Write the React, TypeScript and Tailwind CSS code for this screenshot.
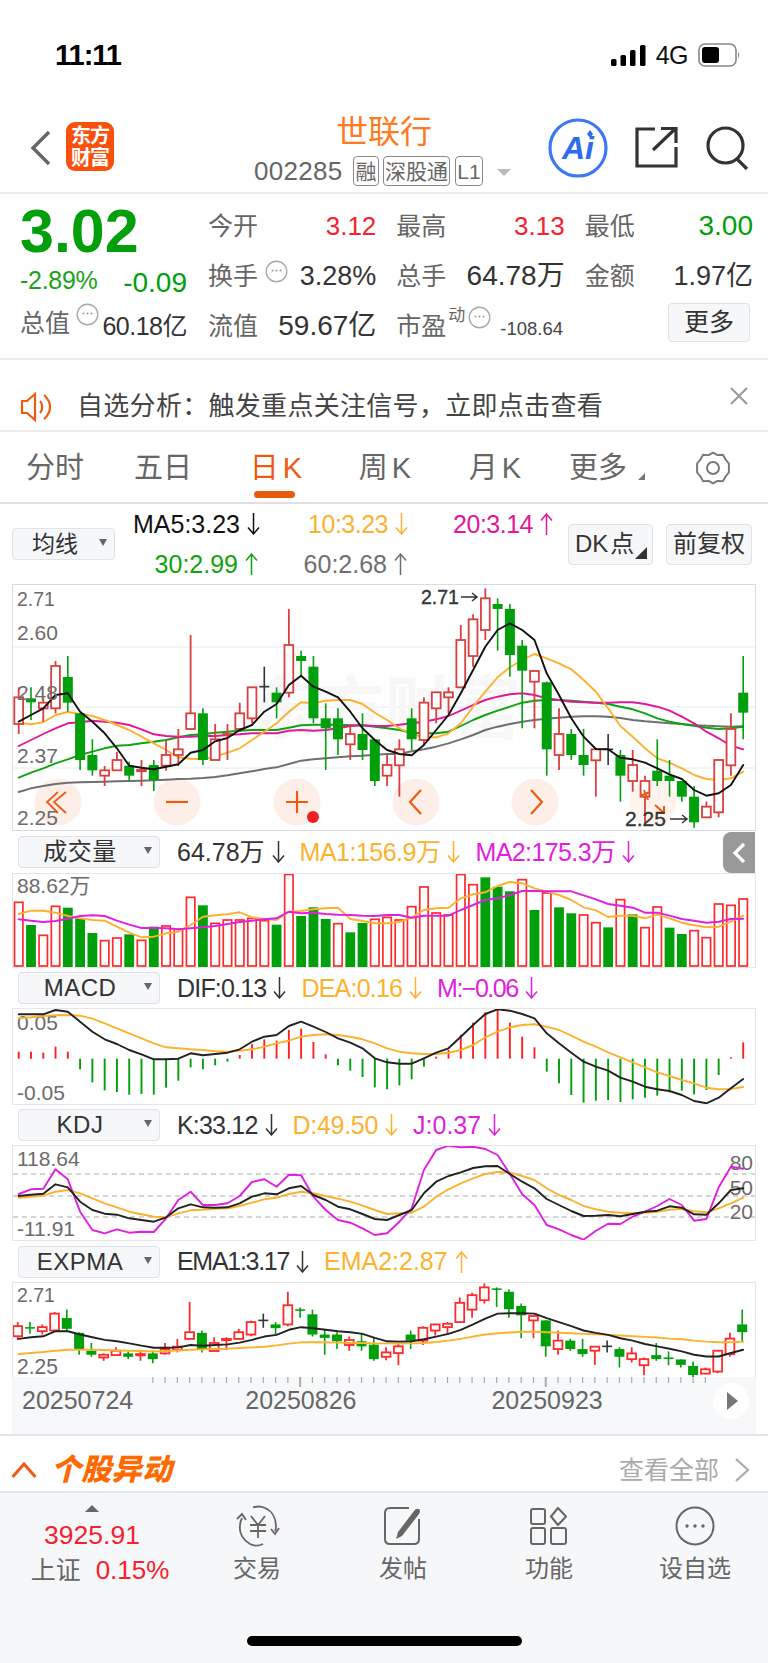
import React from "react";

const X = (i: number) => 18.7 + 12.28 * i;
type C = [number, number, number, number, string];

const mainCandles: C[] = [
  [322,352,432,462,"r"],[322,355,367,420,"g"],[355,368,385,425,"r"],[243,258,385,400,"r"],[228,291,368,395,"g"],
  [400,400,540,570,"g"],[478,525,571,587,"g"],[558,571,587,618,"r"],[515,540,571,571,"r"],[545,557,587,603,"g"],
  [540,570,571,618,"r"],[540,555,600,633,"g"],[480,525,557,572,"r"],[447,508,525,558,"r"],[165,400,447,447,"r"],
  [385,400,540,555,"g"],[432,478,540,540,"r"],[432,462,463,540,"r"],[368,400,447,447,"r"],[320,322,415,430,"r"],
  [260,320,320,367,"k"],[322,338,367,415,"g"],[87,195,338,352,"r"],[212,228,243,290,"g"],[228,260,415,430,"g"],
  [370,415,445,570,"g"],[385,415,478,525,"g"],[432,462,493,540,"r"],[400,462,510,540,"g"],[478,478,603,618,"g"],
  [525,555,587,618,"r"],[478,508,556,650,"r"],[385,415,478,510,"g"],[352,368,480,495,"r"],[335,337,385,430,"r"],
  [322,337,352,400,"r"],[135,180,322,322,"r"],[103,118,228,260,"r"],[25,55,150,180,"r"],[55,72,87,212,"g"],
  [72,87,225,290,"g"],[180,197,272,445,"g"],[272,273,305,445,"r"],[305,307,508,587,"g"],[385,462,525,570,"r"],
  [447,462,525,540,"g"],[447,525,555,587,"g"],[508,508,541,650,"r"],[462,508,508,555,"k"],[510,525,587,665,"g"],
  [510,555,603,635,"r"],[587,603,650,730,"r"],[478,572,603,618,"g"],[540,587,603,650,"g"],[603,603,650,665,"g"],
  [618,650,727,743,"g"],[665,680,712,712,"r"],[540,540,697,712,"r"],[400,447,556,587,"r"],[228,338,398,478,"g"],
];
const ma5 = [425,405,385,345,340,395,425,460,505,557,563,568,560,553,518,510,484,474,450,435,395,372,315,287,320,335,352,395,445,480,510,522,526,495,450,405,340,270,200,150,130,150,180,280,345,415,470,507,508,533,538,548,565,583,597,630,647,640,615,555];
const ma10 = [428,433,427,405,396,402,408,420,435,450,470,490,510,532,536,538,530,518,505,480,455,430,395,367,370,362,360,360,372,398,420,445,462,472,472,460,430,380,335,292,262,240,222,235,250,268,300,335,385,438,470,505,535,548,565,585,597,600,595,575];
const ma20 = [498,480,462,445,430,427,422,425,428,435,448,463,468,470,470,468,468,465,463,460,460,460,452,450,452,450,445,438,436,438,438,434,430,425,418,408,392,375,360,350,343,340,345,355,360,365,367,368,368,367,367,372,380,392,410,430,455,475,497,508];
const ma30 = [593,578,565,550,538,525,515,505,497,495,490,485,480,472,465,463,458,455,452,450,450,450,443,436,434,434,434,436,436,440,445,450,458,460,460,455,438,420,405,392,380,368,362,360,360,362,365,368,372,380,388,400,415,425,432,437,443,447,445,440];
const ma60 = [636,625,618,612,608,607,606,605,604,603,602,601,599,597,596,594,591,586,580,574,567,562,552,542,538,535,532,529,527,524,522,522,514,508,500,490,478,465,450,440,432,425,420,416,413,410,409,409,410,414,420,424,427,430,432,436,437,439,440,439];

const vols = [217,285,316,229,233,265,309,332,324,313,331,290,288,298,202,226,280,270,270,265,272,284,128,258,232,267,281,307,279,268,262,270,230,171,249,255,128,164,142,170,184,149,240,189,232,250,255,278,292,209,253,293,231,293,312,302,323,222,226,207];
const volUp = "rgrrgggrrgrgrrrgrrrrrgrgggrggrrrrrrrrrgggrgrggrrgrgrrggrrrr";
const v1 = [252,242,242,248,258,265,270,272,290,308,322,320,310,305,285,260,256,253,247,262,267,270,245,243,238,235,233,267,273,280,280,276,262,240,235,233,205,193,187,168,156,160,175,185,195,210,232,241,261,257,257,265,254,265,278,286,292,290,275,257];
const v2 = [268,272,276,273,266,258,256,258,272,284,294,294,295,298,295,292,288,282,276,272,268,265,245,250,248,252,254,255,257,258,255,255,263,257,257,257,240,225,210,205,195,183,183,184,184,184,196,208,222,227,233,248,248,257,267,272,278,275,267,266];

const macd = [665,665,668,650,665,718,757,781,786,794,792,794,773,752,712,718,706,695,675,643,628,632,600,596,636,673,706,722,741,772,778,766,748,710,680,660,615,578,547,540,578,620,652,725,760,795,818,812,810,816,808,803,797,787,782,793,780,735,682,637];
const dif = [553,553,553,540,545,575,605,628,642,660,673,688,688,686,670,676,672,668,658,635,620,615,588,575,590,606,625,638,655,685,697,701,701,685,668,655,620,585,552,538,542,552,565,610,640,668,695,710,722,743,755,770,778,783,795,813,820,803,775,747];
const dea = [565,562,558,556,555,557,566,580,595,610,625,640,652,655,658,660,664,665,662,658,650,640,632,620,615,613,615,620,628,640,655,665,670,672,672,668,660,645,622,605,592,585,583,590,600,617,635,650,667,682,697,712,727,738,750,760,773,778,777,771];

const kK = [288,284,281,253,262,305,330,341,344,355,360,365,352,325,313,322,323,322,310,290,280,283,265,258,285,300,320,328,342,357,360,345,330,280,245,228,217,204,199,198,222,245,265,297,315,333,348,347,345,349,342,335,332,319,323,343,344,310,270,265];
const kD = [293,290,287,275,270,280,295,310,322,335,343,350,352,340,331,329,326,325,318,308,298,293,282,275,280,288,296,305,317,330,342,340,338,320,290,268,250,235,222,216,218,228,240,265,285,300,318,328,335,338,340,338,335,329,327,334,337,325,310,293];
const kJ = [282,268,266,208,238,335,390,400,388,398,395,396,355,300,275,315,315,310,288,246,238,260,224,226,290,330,360,368,385,405,400,365,325,210,150,137,142,140,147,165,222,283,315,375,388,405,419,392,371,372,350,335,318,297,315,362,357,262,200,206];

const emaCandles: C[] = [
  [665,677,707,718,"r"],[665,680,683,700,"g"],[672,680,692,702,"r"],[635,640,690,692,"r"],[628,653,685,692,"g"],
  [695,697,745,762,"g"],[727,750,762,768,"g"],[758,762,770,780,"r"],[740,750,763,763,"r"],[752,758,768,775,"g"],
  [752,760,761,780,"r"],[750,758,775,787,"g"],[727,745,758,762,"r"],[715,738,747,755,"r"],[605,695,715,715,"r"],
  [690,697,745,755,"g"],[710,727,751,751,"r"],[710,715,716,748,"r"],[685,695,715,718,"r"],[660,665,702,707,"r"],
  [640,660,660,682,"k"],[665,672,683,702,"g"],[575,615,672,678,"r"],[622,627,630,652,"g"],[628,642,702,708,"g"],
  [685,702,712,762,"g"],[695,702,722,745,"g"],[708,718,733,750,"r"],[697,722,737,750,"g"],[710,732,775,780,"g"],
  [740,755,768,778,"r"],[730,737,757,793,"r"],[690,702,720,745,"g"],[677,682,720,733,"r"],[670,672,690,705,"r"],
  [665,670,680,703,"r"],[592,608,665,665,"r"],[578,585,628,652,"r"],[550,562,600,610,"r"],[562,565,567,620,"g"],
  [568,575,627,652,"g"],[610,617,645,713,"g"],[645,647,660,713,"r"],[660,660,737,768,"g"],[690,720,745,762,"r"],
  [715,720,745,750,"g"],[715,745,760,768,"g"],[737,738,750,792,"r"],[720,737,737,755,"k"],[740,745,768,800,"g"],
  [740,758,775,785,"r"],[770,775,793,823,"r"],[727,763,775,780,"g"],[752,770,771,793,"g"],[775,776,792,800,"g"],
  [782,795,822,830,"g"],[800,805,818,820,"r"],[750,750,812,817,"r"],[697,714,760,768,"r"],[628,672,695,722,"g"],
];
const ema1 = [715,710,707,692,692,702,710,718,722,728,735,741,741,740,733,735,733,731,726,718,708,703,688,680,683,688,692,695,700,712,722,723,722,716,708,700,688,672,655,640,639,639,640,653,665,677,690,697,703,713,720,730,737,744,752,762,767,767,757,747];
const ema2 = [760,757,754,750,747,747,747,748,749,750,751,752,751,749,747,746,745,744,742,740,738,734,729,725,725,725,726,727,727,728,728,729,728,727,724,720,715,708,702,698,696,694,694,695,697,698,700,701,703,705,707,709,711,714,716,720,723,725,725,723];

const ORANGE = "#FDB22F";
const MAG = "#E020E0";

function Line({ d, base, color, w = 1.9, dx = 0 }: { d: number[]; base: number; color: string; w?: number; dx?: number }) {
  return (
    <polyline
      points={d.map((z, i) => `${(X(i) + dx).toFixed(1)},${(base + z / 3).toFixed(1)}`).join(" ")}
      fill="none"
      stroke={color}
      strokeWidth={w}
      strokeLinejoin="round"
      strokeLinecap="round"
    />
  );
}

function Candles({ data, base, red, dx = 0 }: { data: C[]; base: number; red: string; dx?: number }) {
  const G = "#009F0B";
  return (
    <g>
      {data.map(([h, t, b, l, k], i) => {
        const x = X(i) + dx;
        const y = (z: number) => base + z / 3;
        if (k === "k") {
          return (
            <g key={i} stroke="#333" strokeWidth={1.6}>
              <line x1={x} x2={x} y1={y(h)} y2={y(l)} />
              <line x1={x - 5} x2={x + 5} y1={y(t)} y2={y(t)} />
            </g>
          );
        }
        if (k === "g") {
          return (
            <g key={i}>
              <line x1={x} x2={x} y1={y(h)} y2={y(l)} stroke={G} strokeWidth={1.6} />
              <rect x={x - 5} y={y(t)} width={10} height={Math.max(y(b) - y(t), 1.5)} fill={G} />
            </g>
          );
        }
        return (
          <g key={i} stroke={red} strokeWidth={1.8}>
            <line x1={x} x2={x} y1={y(h)} y2={y(t)} />
            <line x1={x} x2={x} y1={y(b)} y2={y(l)} />
            <rect x={x - 4.4} y={y(t)} width={8.8} height={Math.max(y(b) - y(t), 1.2)} fill="#fff" />
          </g>
        );
      })}
    </g>
  );
}

const LBL = { fontFamily: "'Liberation Sans',sans-serif", fontSize: 21, fill: "#6b6b6b" };

function ChartBox({ top, h, cls, children }: { top: number; h: number; cls: string; children: React.ReactNode }) {
  return (
    <div className={cls}>
      <svg className="block w-full h-full" viewBox={`13 ${top + 1} 742 ${h - 2}`} preserveAspectRatio="none">
        {children}
      </svg>
    </div>
  );
}

function Sel({ label }: { label: string }) {
  return (
    <div className="relative flex items-center justify-center w-[142px] h-[32px] bg-[#f6f7f9] border border-[#dfe2e8] rounded-[4px] text-[24px] leading-none text-[#333] pr-[18px] tracking-[0.5px]">
      {label}
      <span className="absolute right-[7px] top-[10px] w-0 h-0 border-l-[4.5px] border-r-[4.5px] border-t-[7px] border-l-transparent border-r-transparent border-t-[#666]" />
    </div>
  );
}

function Arrow({ up }: { up?: boolean }) {
  return (
    <svg className="ml-[7px] shrink-0" width="13" height="22" viewBox="0 0 13 22" fill="none" stroke="currentColor" strokeWidth="1.5">
      {up ? <path d="M6.5 22 V1 M1 7.5 L6.5 1 L12 7.5" /> : <path d="M6.5 0 V21 M1 14.5 L6.5 21 L12 14.5" />}
    </svg>
  );
}

function Val({ t, up, color, cls = "" }: { t: string; up?: boolean; color: string; cls?: string }) {
  return (
    <span className={`inline-flex items-center text-[25px] leading-none whitespace-nowrap ${color} ${cls}`}>
      {t}
      <Arrow up={up} />
    </span>
  );
}

function Info() {
  return (
    <svg width="23" height="23" viewBox="0 0 23 23" className="shrink-0">
      <circle cx="11.5" cy="11.5" r="10.3" fill="none" stroke="#aaa" strokeWidth="1.4" />
      <circle cx="7.5" cy="10.5" r="1" fill="#999" />
      <circle cx="11.5" cy="10.5" r="1" fill="#999" />
      <circle cx="15.5" cy="10.5" r="1" fill="#999" />
    </svg>
  );
}

function Cell({ label, value, color = "text-[#333]", info, size = "text-[28px]" }: { label: string; value: string; color?: string; info?: boolean; size?: string }) {
  return (
    <div className="flex items-center justify-between h-[50px]">
      <span className="flex items-start text-[25px] leading-none text-[#666]">
        {label}
        {info && <span className="ml-[7px] -mt-[4px]"><Info /></span>}
      </span>
      <span className={`leading-none whitespace-nowrap ${size} ${color}`}>{value}</span>
    </div>
  );
}

function Circle({ cx, children }: { cx: number; children: React.ReactNode }) {
  return (
    <g>
      <circle cx={cx} cy={802} r={23.5} fill="#FCE4D8" fillOpacity={0.6} />
      <g fill="none" stroke="#EE5A10" strokeWidth={2.2}>{children}</g>
    </g>
  );
}

function MainChart() {
  return (
    <ChartBox top={584} h={247} cls="ml-[12px] w-[744px] h-[247px] border border-[#d8dbe6]">
      {[647, 707, 768].map((y) => (
        <line key={y} x1={13} x2={755} y1={y} y2={y} stroke="#eef0f5" strokeWidth={1.6} />
      ))}
      <text x={385} y={733} textAnchor="middle" fontFamily="'Noto Sans CJK SC',sans-serif" fontWeight={700} fontSize={68} fill="#f7f7f7">东方财富</text>
      <Circle cx={58}><path d="M66 792 L54 802 L66 813 M58 792 L47 802 L58 813" strokeWidth={1.8} /></Circle>
      <Circle cx={177}><path d="M166 802 H188" /></Circle>
      <Circle cx={297}><path d="M286 802 H308 M297 791 V813" /></Circle>
      <Circle cx={416}><path d="M421 790 L410 802 L421 814" /></Circle>
      <Circle cx={535}><path d="M531 790 L542 802 L531 814" /></Circle>
      <circle cx={653} cy={802} r={23.5} fill="#FCE4D8" fillOpacity={0.45} />
      <Line d={ma60} base={580} color="#6f6f6f" />
      <Line d={ma30} base={580} color="#0FA30F" />
      <Line d={ma20} base={580} color="#E0189A" />
      <Line d={ma10} base={580} color={ORANGE} />
      <Candles data={mainCandles} base={580} red="#D93F3F" />
      <Line d={ma5} base={580} color="#111" />
      <path d="M644 790 L648 800 M640 796 L650 792" stroke="#EE5A10" strokeWidth={2} fill="none" />
      <path d="M655 805 L664 813 M657 813 H664 V806" stroke="#EE5A10" strokeWidth={2} fill="none" />
      <circle cx={313} cy={817} r={6} fill="#F02020" />
      <text x={17} y={606} {...LBL} fontSize={19.5}>2.71</text>
      <text x={17} y={640} {...LBL}>2.60</text>
      <text x={17} y={700} {...LBL}>2.48</text>
      <text x={17} y={763} {...LBL}>2.37</text>
      <text x={17} y={825} {...LBL}>2.25</text>
      <text x={421} y={604} fontFamily="'Liberation Sans',sans-serif" fontSize={19.5} stroke="#333" strokeWidth={0.35} fill="#333">2.71</text>
      <path d="M461 597 H477 M472 593 L477 597 L472 601" stroke="#333" strokeWidth={1.5} fill="none" />
      <text x={625} y={826} fontFamily="'Liberation Sans',sans-serif" fontSize={21} stroke="#333" strokeWidth={0.35} fill="#333">2.25</text>
      <path d="M670 819 H687 M682 815 L687 819 L682 823" stroke="#333" strokeWidth={1.5} fill="none" />
    </ChartBox>
  );
}

function VolChart() {
  return (
    <ChartBox top={873} h={95} cls="ml-[12px] w-[744px] h-[95px] border border-[#e6e6e6]">
      {vols.map((z, i) => {
        const y = Math.max(830 + z / 3, 874.5);
        const x = X(i);
        return volUp[i] === "g" ? (
          <rect key={i} x={x - 4.9} y={y} width={9.8} height={967 - y} fill="#009F0B" />
        ) : (
          <rect key={i} x={x - 4.2} y={y} width={8.4} height={966 - y} fill="#fff" stroke="#FF2B2B" strokeWidth={1.7} />
        );
      })}
      <Line d={v1} base={830} color={ORANGE} />
      <Line d={v2} base={830} color={MAG} />
      <text x={17} y={893} {...LBL} fontFamily="'Liberation Sans','Noto Sans CJK SC',sans-serif">88.62万</text>
    </ChartBox>
  );
}

function MacdChart() {
  return (
    <ChartBox top={1008} h={97} cls="ml-[12px] w-[744px] h-[97px] border border-[#e6e6e6]">
      {macd.map((z, i) => (
        <line key={i} x1={X(i)} x2={X(i)} y1={830 + 686 / 3} y2={830 + z / 3} stroke={z < 686 ? "#FF2020" : "#009F0B"} strokeWidth={1.9} />
      ))}
      <text x={17} y={1030} {...LBL}>0.05</text>
      <text x={17} y={1100} {...LBL}>-0.05</text>
      <Line d={dea} base={830} color={ORANGE} />
      <Line d={dif} base={830} color="#222" />
    </ChartBox>
  );
}

function KdjChart() {
  return (
    <ChartBox top={1145} h={96} cls="ml-[12px] w-[744px] h-[96px] border border-[#e6e6e6]">
      {[1174, 1196, 1217].map((y) => (
        <line key={y} x1={13} x2={755} y1={y} y2={y} stroke="#c8c8c8" strokeWidth={1.3} strokeDasharray="5 4" />
      ))}
      <text x={17} y={1166} {...LBL}>118.64</text>
      <text x={17} y={1236} {...LBL}>-11.91</text>
      <text x={753} y={1170} textAnchor="end" {...LBL}>80</text>
      <text x={753} y={1195} textAnchor="end" {...LBL}>50</text>
      <text x={753} y={1219} textAnchor="end" {...LBL}>20</text>
      <Line d={kD} base={1100} color={ORANGE} />
      <Line d={kJ} base={1100} color={MAG} />
      <Line d={kK} base={1100} color="#222" />
    </ChartBox>
  );
}

function EmaChart() {
  return (
    <ChartBox top={1282} h={95} cls="ml-[12px] w-[744px] h-[95px] border border-b-0 border-[#e6e6e6]">
      <Candles data={emaCandles} base={1100} red="#FF2B2B" dx={-1} />
      <Line d={ema2} base={1100} color={ORANGE} />
      <Line d={ema1} base={1100} color="#222" />
      <text x={17} y={1302} {...LBL} fontSize={19.5}>2.71</text>
      <text x={17} y={1373} {...LBL}>2.25</text>
    </ChartBox>
  );
}

function AxisRow() {
  return (
    <div className="relative ml-[12px] w-[744px] h-[57px] bg-[#f7f8fa] flex items-start text-[25px] leading-none text-[#666]">
      <svg className="absolute left-0 top-0" width="744" height="12" viewBox="12 1377 744 12">
        {Array.from({ length: 46 }, (_, k) => k + 11).map((i) => (
          <line key={i} x1={X(i) - 1} x2={X(i) - 1} y1={1377} y2={i === 23 || i === 43 ? 1387 : 1383} stroke="#aaa" strokeWidth={i === 23 || i === 43 ? 2 : 1.2} />
        ))}
      </svg>
      <span className="ml-[10px] mt-[11px]">20250724</span>
      <span className="ml-[112px] mt-[11px]">20250826</span>
      <span className="ml-[135px] mt-[11px]">20250923</span>
      <span className="absolute left-[701px] top-[6px] w-[36px] h-[36px] rounded-full bg-white flex items-center justify-center">
        <span className="ml-[3px] w-0 h-0 border-t-[9px] border-b-[9px] border-l-[11px] border-t-transparent border-b-transparent border-l-[#777]" />
      </span>
    </div>
  );
}

function NavItem({ label, children }: { label: string; children: React.ReactNode }) {
  return (
    <div className="flex flex-col items-center pt-[12px] w-[146px]">
      <div className="h-[42px] flex items-center">{children}</div>
      <span className="mt-[10px] text-[24px] leading-none text-[#666]">{label}</span>
    </div>
  );
}

export default function App() {
  return (
    <div className="relative w-[768px] h-[1663px] bg-white overflow-hidden font-['Liberation_Sans','Noto_Sans_CJK_SC',sans-serif]">
      {/* status */}
      <div className="h-[100px] relative">
        <div className="flex items-center justify-between pt-[41px] pl-[55px] pr-[28px]">
          <span className="text-[29px] leading-[28px] font-bold text-black tracking-[-1px]">11:11</span>
          <div className="flex items-center">
            <svg width="35" height="21" viewBox="0 0 35 21" fill="#000">
              <rect x="0" y="14" width="5.5" height="7" rx="1.5" />
              <rect x="9.5" y="10" width="5.5" height="11" rx="1.5" />
              <rect x="19" y="5" width="5.5" height="16" rx="1.5" />
              <rect x="29" y="0" width="5.5" height="21" rx="1.5" />
            </svg>
            <span className="ml-[10px] text-[25px] leading-none font-medium text-[#111] tracking-[-0.5px]">4G</span>
            <svg className="ml-[10px]" width="42" height="24" viewBox="0 0 42 24">
              <rect x="1" y="1" width="37" height="22" rx="6" fill="none" stroke="#888" strokeWidth="1.6" />
              <rect x="4" y="4" width="17" height="16" rx="3" fill="#000" />
              <path d="M40 9 C41.5 10 41.5 14 40 15 Z" fill="#888" />
            </svg>
          </div>
        </div>
      </div>
      {/* header */}
      <div className="flex h-[94px] border-b-2 border-[#ececec]">
        <div className="w-[254px] pl-[30px] pt-[22px] flex items-start">
          <svg className="mt-[8px]" width="20" height="36" viewBox="0 0 20 36" fill="none" stroke="#666" strokeWidth="3.4">
            <path d="M19 2 L3 18 L19 34" />
          </svg>
          <div className="ml-[16px] w-[48px] h-[49px] rounded-[9px] bg-[#FB500C] text-white text-[20px] leading-[22px] font-bold flex flex-col items-center justify-center tracking-[-1px]">
            <span>东方</span>
            <span>财富</span>
          </div>
        </div>
        <div className="w-[260px] flex flex-col">
          <div className="pt-[13px] text-center text-[32px] leading-[38px] text-[#FF7A1E]">世联行</div>
          <div className="flex items-center mt-[5px]">
            <span className="text-[26px] leading-none text-[#666] w-[99px] tracking-[0.3px]">002285</span>
            <span className="flex items-center justify-center h-[30px] w-[26px] border border-[#888] rounded-[4px] text-[21px] leading-none text-[#666]">融</span>
            <span className="ml-[4px] flex items-center justify-center h-[30px] w-[67px] border border-[#888] rounded-[4px] text-[21px] leading-none text-[#666]">深股通</span>
            <span className="ml-[5px] flex items-center justify-center h-[30px] w-[28px] border border-[#888] rounded-[4px] text-[21px] leading-none text-[#666]">L1</span>
            <span className="ml-[14px] mt-[2px] w-0 h-0 border-l-[7px] border-r-[7px] border-t-[7px] border-l-transparent border-r-transparent border-t-[#bbb]" />
          </div>
        </div>
        <div className="flex items-start pt-[18px]">
          <svg className="ml-[34px]" width="60" height="60" viewBox="0 0 60 60">
            <circle cx="30" cy="30" r="28" fill="none" stroke="#3D78F2" strokeWidth="3.2" />
            <text x="30" y="41" textAnchor="middle" fontFamily="'Liberation Sans',sans-serif" fontWeight="700" fontStyle="italic" fontSize="32" fill="#2E6BF0">Ai</text>
            <path d="M42 12 L45 16 L42 20 L39 16 Z" fill="#2E6BF0" />
          </svg>
          <svg className="ml-[27px] mt-[8px]" width="43" height="42" viewBox="0 0 43 42" fill="none" stroke="#333" strokeWidth="3.2">
            <path d="M20 3 H2 V40 H41 V21" />
            <path d="M18 24 L40 3 M26 2.5 H41 V17" />
          </svg>
          <svg className="ml-[28px] mt-[8px]" width="44" height="44" viewBox="0 0 44 44" fill="none" stroke="#333" strokeWidth="3.2">
            <circle cx="19.5" cy="19.5" r="17.5" />
            <path d="M31 33 L41 43" />
          </svg>
        </div>
      </div>
      {/* quote */}
      <div className="flex h-[166px] border-b-2 border-[#ececec] pt-[7px]">
        <div className="pl-[20px] w-[208px] flex flex-col">
          <span className="text-[61px] leading-[56px] mt-[2px] font-semibold text-[#009F0B]">3.02</span>
          <div className="mt-[9px] w-[167px] flex justify-between items-start h-[28px]">
            <span className="text-[25px] leading-none text-[#1AA31A] tracking-[-0.3px]">-2.89%</span>
            <span className="text-[28px] leading-none text-[#009F0B] mt-[1px]">-0.09</span>
          </div>
          <div className="mt-[10px] w-[167px] flex items-center justify-between h-[34px]">
            <span className="flex items-start text-[25px] leading-none text-[#666]">总值<span className="ml-[6px] -mt-[8px]"><Info /></span></span>
            <span className="text-[25px] leading-none text-[#333] tracking-[-0.5px] mt-[6px]">60.18亿</span>
          </div>
        </div>
        <div className="w-[545px] grid grid-cols-3 gap-x-[20px] content-start">
          <Cell label="今开" value="3.12" size="text-[26px]" color="text-[#F5222D]" />
          <Cell label="最高" value="3.13" size="text-[26px]" color="text-[#F5222D]" />
          <Cell label="最低" value="3.00" color="text-[#009F0B]" />
          <Cell label="换手" value="3.28%" size="text-[27px]" info />
          <Cell label="总手" value="64.78万" />
          <Cell label="金额" value="1.97亿" size="text-[27px]" />
          <Cell label="流值" value="59.67亿" />
          <div className="flex items-center h-[50px] relative">
            <span className="text-[25px] leading-none text-[#666]">市盈</span>
            <span className="ml-[2px] -mt-[22px] text-[17px] leading-none text-[#666]">动</span>
            <span className="ml-[3px] -mt-[18px]"><Info /></span>
            <span className="ml-[9px] mt-[6px] text-[18.5px] leading-none text-[#444]">-108.64</span>
          </div>
          <div className="flex items-center justify-end h-[50px] -mt-[4px]">
            <span className="w-[82px] h-[39px] mr-[3px] flex items-center justify-center bg-[#f6f7f9] border border-[#dfe1e6] rounded-[4px] text-[25px] leading-none text-[#333]">更多</span>
          </div>
        </div>
      </div>
      {/* alert */}
      <div className="flex items-center h-[72px] pt-[22px] border-b-2 border-[#ececec] relative">
        <svg className="ml-[20px] mt-[1px]" width="34" height="30" viewBox="0 0 34 30" fill="none" stroke="#EE5A10" strokeWidth="2.2">
          <path d="M15 2 L7 9 H2 V21 H7 L15 28 Z" />
          <path d="M20 9 C23 12 23 18 20 21 M24 3 C32 10 32 20 24 27" />
        </svg>
        <span className="ml-[23px] text-[26px] leading-none text-[#444] tracking-[0.3px]">自选分析：触发重点关注信号，立即点击查看</span>
        <svg className="absolute left-[729px] top-[27px]" width="20" height="18" viewBox="0 0 20 18" stroke="#999" strokeWidth="2">
          <path d="M2 1 L18 17 M18 1 L2 17" />
        </svg>
      </div>
      {/* tabs */}
      <div className="flex items-center h-[72px] border-b-2 border-[#dcdfe6] text-[29px] leading-none text-[#666] relative pt-[2px] [word-spacing:-4px]">
        <span className="w-[110px] text-center">分时</span>
        <span className="w-[106px] text-center">五日</span>
        <span className="w-[120px] text-center text-[#EE5A10]">日 K</span>
        <span className="w-[98px] text-center">周 K</span>
        <span className="w-[122px] text-center">月 K</span>
        <span className="w-[84px] text-center">更多</span>
        <span className="mt-[16px] -ml-[2px] w-0 h-0 border-l-[7px] border-b-[7px] border-l-transparent border-b-[#777]" />
        <svg className="ml-[50px]" width="36" height="36" viewBox="0 0 24 24" fill="none" stroke="#777" strokeWidth="1.3" strokeLinejoin="round">
          <path d="M12 1.8 L15 3.4 L18.6 3.2 L20.3 6.2 L22.6 9 L22.6 15 L20.3 17.8 L18.6 20.8 L15 20.6 L12 22.2 L9 20.6 L5.4 20.8 L3.7 17.8 L1.4 15 L1.4 9 L3.7 6.2 L5.4 3.2 L9 3.4 Z" />
          <circle cx="12" cy="12" r="4" />
        </svg>
        <span className="absolute left-[254px] top-[59px] w-[41px] h-[7px] rounded-full bg-[#E85A0C]" />
      </div>
      {/* MA row */}
      <div className="flex h-[80px] items-center relative">
        <div className="ml-[12px] w-[103px] h-[32px] bg-[#f6f7f9] border border-[#dfe2e8] rounded-[4px] flex items-center text-[23px] leading-none text-[#333] relative">
          <span className="ml-[19px]">均线</span>
          <span className="absolute right-[7px] top-[10px] w-0 h-0 border-l-[4.5px] border-r-[4.5px] border-t-[7px] border-l-transparent border-r-transparent border-t-[#666]" />
        </div>
        <div className="w-[438px] flex flex-col gap-[15px]">
          <div className="flex h-[25px]">
            <span className="w-[145px] text-right"><Val t="MA5:3.23" color="text-[#111]" /></span>
            <span className="w-[148px] text-right"><Val t="10:3.23" color="text-[#FDB22F]" cls="tracking-[-0.5px]" /></span>
            <span className="w-[145px] text-right"><Val t="20:3.14" up color="text-[#E0189A]" cls="tracking-[-0.5px]" /></span>
          </div>
          <div className="flex h-[25px]">
            <span className="w-[143px] text-right"><Val t="30:2.99" up color="text-[#0FA30F]" /></span>
            <span className="w-[149px] text-right"><Val t="60:2.68" up color="text-[#6f6f6f]" /></span>
          </div>
        </div>
        <div className="ml-[15px] relative w-[85px] h-[41px] bg-[#f6f7f9] border border-[#dfe2e8] rounded-[4px] flex items-center pl-[6px] text-[24px] leading-none text-[#333]">
          DK<span className="ml-[2px]">点</span>
          <span className="absolute right-[5px] bottom-[5px] w-0 h-0 border-l-[12px] border-b-[12px] border-l-transparent border-b-[#333]" />
        </div>
        <div className="ml-[13px] w-[86px] h-[41px] bg-[#f6f7f9] border border-[#dfe2e8] rounded-[4px] flex items-center justify-center text-[24px] leading-none text-[#333]">
          前复权
        </div>
      </div>
      <MainChart />
      {/* Volume */}
      <div className="relative h-[42px] flex items-center pl-[18px] gap-[15px]">
        <Sel label="成交量" />
        <Val t="64.78万" color="text-[#333]" cls="ml-[2px]" />
        <Val t="MA1:156.9万" color="text-[#FDB22F]" cls="tracking-[-0.5px]" />
        <Val t="MA2:175.3万" color="text-[#E020E0]" cls="tracking-[-0.6px]" />
        <div className="absolute left-[723px] top-[1px] w-[32px] h-[41px] bg-[#999] rounded-l-[8px] flex items-center justify-center">
          <svg width="14" height="22" viewBox="0 0 14 22" fill="none" stroke="#fff" strokeWidth="3.2"><path d="M12 2 L3 11 L12 20" /></svg>
        </div>
      </div>
      <VolChart />
      <div className="h-[40px] flex items-center pl-[18px] gap-[15px]">
        <Sel label="MACD" />
        <Val t="DIF:0.13" color="text-[#333]" cls="ml-[2px] tracking-[-0.8px]" />
        <Val t="DEA:0.16" color="text-[#FDB22F]" cls="tracking-[-0.8px]" />
        <Val t="M:−0.06" color="text-[#E020E0]" cls="tracking-[-1.5px]" />
      </div>
      <MacdChart />
      <div className="h-[40px] flex items-center pl-[18px] gap-[15px]">
        <Sel label="KDJ" />
        <Val t="K:33.12" color="text-[#333]" cls="ml-[2px] tracking-[-0.8px]" />
        <Val t="D:49.50" color="text-[#FDB22F]" cls="tracking-[-0.3px]" />
        <Val t="J:0.37" color="text-[#E020E0]" />
      </div>
      <KdjChart />
      <div className="h-[41px] flex items-center pl-[18px] gap-[15px]">
        <Sel label="EXPMA" />
        <Val t="EMA1:3.17" color="text-[#333]" cls="ml-[2px] tracking-[-1.3px]" />
        <Val t="EMA2:2.87" up color="text-[#FDB22F]" />
      </div>
      <EmaChart />
      <AxisRow />
      {/* 个股异动 */}
      <div className="h-[59px] pt-[13px] border-t-2 border-b-2 border-[#e2e4ea] flex items-center">
        <svg className="ml-[11px]" width="26" height="16" viewBox="0 0 26 16" fill="none" stroke="#EE5A10" strokeWidth="3"><path d="M1.5 15 L13 2 L24.5 15" /></svg>
        <span className="ml-[14px] text-[30px] leading-none italic font-black text-[#FF6A00] tracking-[0.3px]">个股异动</span>
        <span className="ml-auto text-[25px] leading-none text-[#aaa]">查看全部</span>
        <svg className="ml-[15px] mr-[18px]" width="16" height="24" viewBox="0 0 16 24" fill="none" stroke="#aaa" strokeWidth="2.2"><path d="M2 1 L14 12 L2 23" /></svg>
      </div>
      {/* nav */}
      <div className="h-[170px] bg-[#f6f7f9] relative flex items-start">
        <div className="w-[184px] flex flex-col items-center pt-[12px]">
          <span className="w-0 h-0 border-l-[7px] border-r-[7px] border-b-[7px] border-l-transparent border-r-transparent border-b-[#666]" />
          <span className="mt-[9px] text-[26.5px] leading-[28px] text-[#F5222D]">3925.91</span>
          <div className="ml-[16px] mt-[8px] flex items-center">
            <span className="text-[25px] leading-none text-[#666]">上证</span>
            <span className="ml-[15px] text-[26px] leading-none text-[#F5222D]">0.15%</span>
          </div>
        </div>
        <div className="flex">
          <NavItem label="交易">
            <svg width="46" height="42" viewBox="0 0 46 42" fill="none" stroke="#666" strokeWidth="1.8" className="ml-[1px]">
              <path d="M18 2.5 C21 1.5 26 1 30 3 C37 6 41 13 41 21 C41 22 41 24 40 26" />
              <path d="M36 24 L40 29 L44 23" />
              <path d="M28 39 C24 41 19 41 15 39 C8 35 4 28 5 21 C5 18 6 15 7 13" />
              <path d="M2 14 L7 9 L11 15" />
              <path d="M16 11 L23 20 L30 11 M15 20 H31 M15 26 H31 M23 20 V33" />
            </svg>
          </NavItem>
          <NavItem label="发帖">
            <svg width="40" height="40" viewBox="0 0 40 40" fill="none" stroke="#666" strokeWidth="2">
              <path d="M26 2 H7 Q2 2 2 7 V33 Q2 38 7 38 H31 Q36 38 36 33 V13" />
              <path d="M15 26 L31 5 Q33 2 36 3 Q38 5 36 8 L19 30 L13 33 Z" fill="#666" stroke="none" />
            </svg>
          </NavItem>
          <NavItem label="功能">
            <svg width="38" height="38" viewBox="0 0 38 38" fill="none" stroke="#666" strokeWidth="2">
              <rect x="1" y="2" width="14" height="15" rx="2" />
              <rect x="1" y="21" width="14" height="16" rx="2" />
              <rect x="21" y="21" width="15" height="16" rx="2" />
              <path d="M28 1 L36 9.5 L28 18 L21 9.5 Z" strokeLinejoin="round" />
            </svg>
          </NavItem>
          <NavItem label="设自选">
            <svg width="40" height="40" viewBox="0 0 40 40" fill="none" stroke="#666" strokeWidth="2">
              <circle cx="20" cy="20" r="18.5" />
              <circle cx="12" cy="20" r="1.7" fill="#666" stroke="none" />
              <circle cx="20" cy="20" r="1.7" fill="#666" stroke="none" />
              <circle cx="28" cy="20" r="1.7" fill="#666" stroke="none" />
            </svg>
          </NavItem>
        </div>
        <div className="absolute left-[247px] top-[143px] w-[275px] h-[10px] rounded-full bg-black" />
      </div>
    </div>
  );
}
